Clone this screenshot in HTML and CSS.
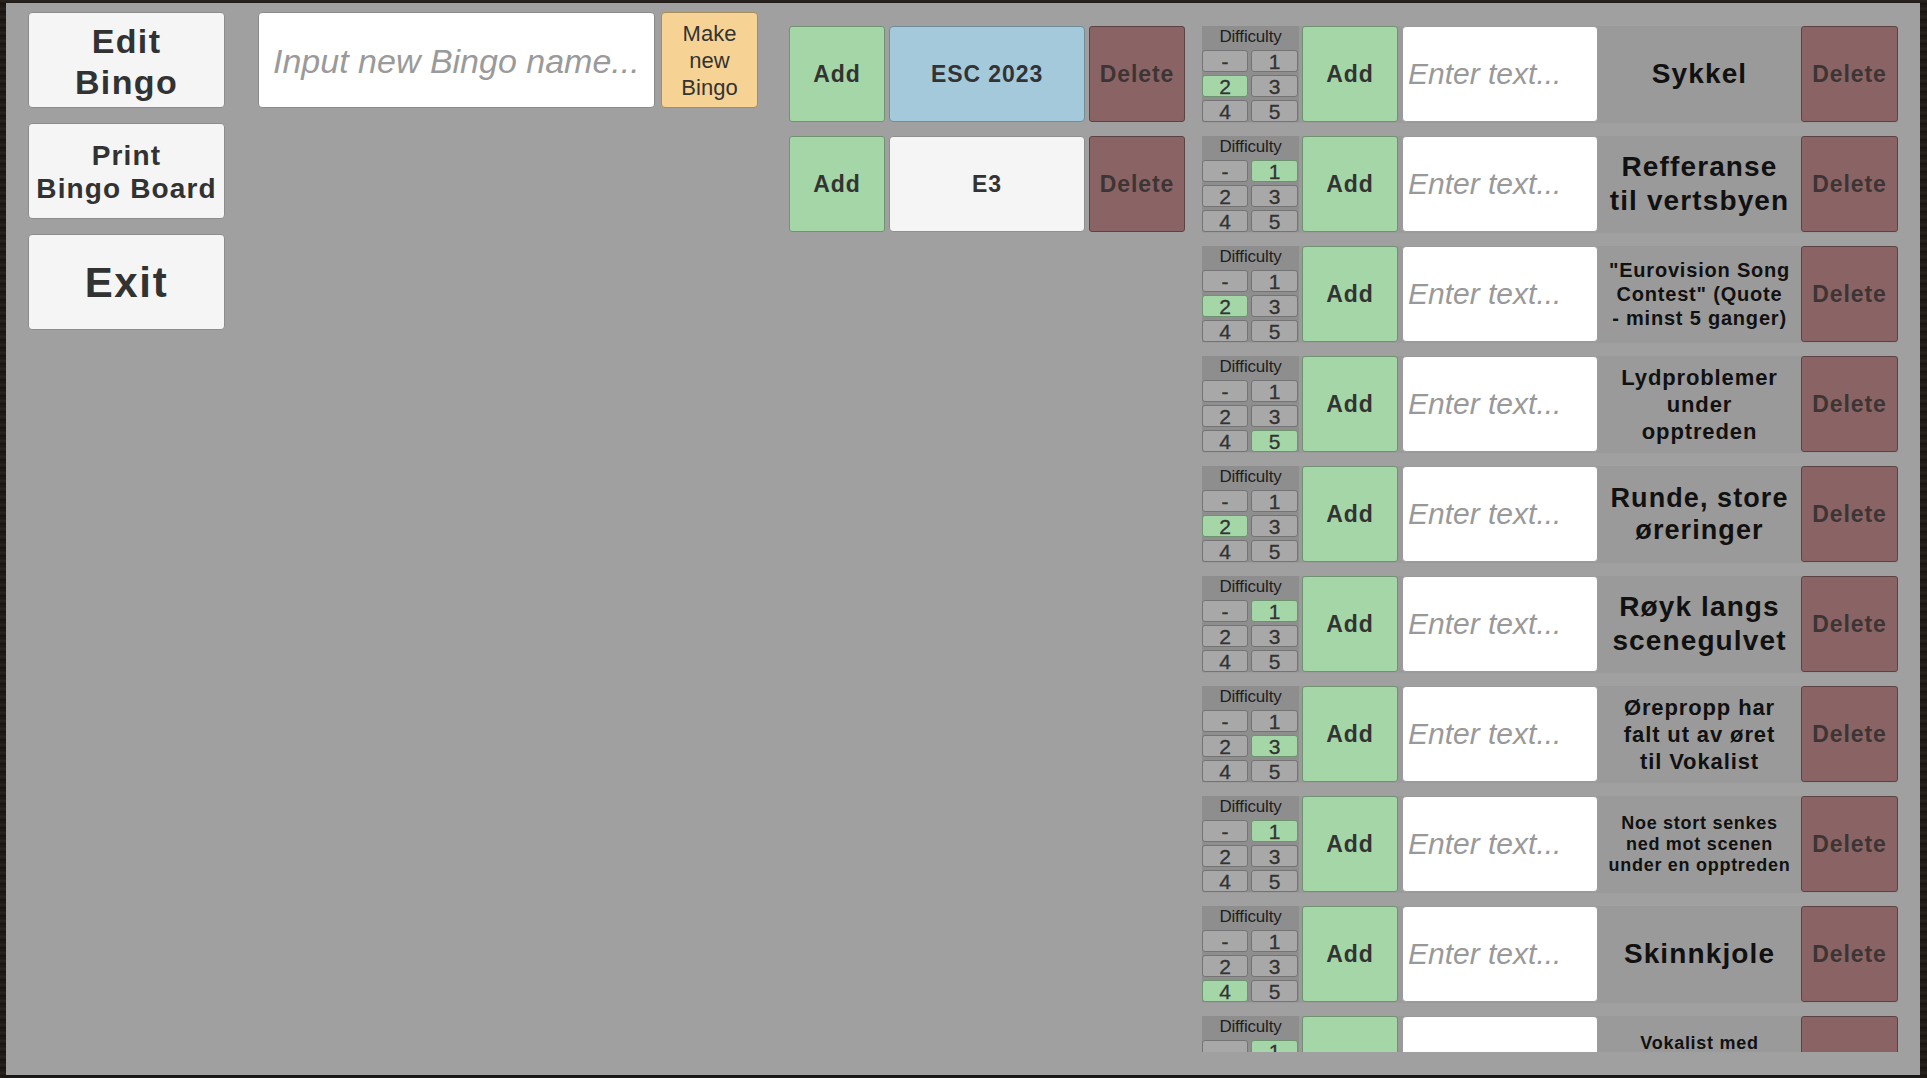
FILE: index.html
```html
<!DOCTYPE html>
<html>
<head>
<meta charset="utf-8">
<title>Edit Bingo</title>
<link rel="stylesheet" href="styles.css">
</head>
<body>
<div class="frame">
  <div class="panel">
    <div class="nav">
      <div class="navbtn edit">Edit<br>Bingo</div>
      <div class="navbtn print">Print<br>Bingo Board</div>
      <div class="navbtn exit">Exit</div>
    </div>

    <div class="newbingo">
      <div class="nameinput"><span class="ph">Input new Bingo name...</span></div>
      <div class="make">Make<br>new<br>Bingo</div>
    </div>

    <div class="bingolist">
      <div class="brow">
        <div class="btn add">Add</div>
        <div class="bname active">ESC 2023</div>
        <div class="btn del">Delete</div>
      </div>
      <div class="brow">
        <div class="btn add">Add</div>
        <div class="bname">E3</div>
        <div class="btn del">Delete</div>
      </div>
    </div>

    <div class="items">
      <div class="item">
        <div class="diff"><div class="diffhead">Difficulty</div>
          <div class="diffgrid"><span class="d">-</span><span class="d">1</span><span class="d sel">2</span><span class="d">3</span><span class="d">4</span><span class="d">5</span></div></div>
        <div class="btn add iadd">Add</div>
        <div class="entry"><span class="ph2">Enter text...</span></div>
        <div class="label s28">Sykkel</div>
        <div class="btn del idel">Delete</div>
      </div>

      <div class="item">
        <div class="diff"><div class="diffhead">Difficulty</div>
          <div class="diffgrid"><span class="d">-</span><span class="d sel">1</span><span class="d">2</span><span class="d">3</span><span class="d">4</span><span class="d">5</span></div></div>
        <div class="btn add iadd">Add</div>
        <div class="entry"><span class="ph2">Enter text...</span></div>
        <div class="label s28">Refferanse<br>til vertsbyen</div>
        <div class="btn del idel">Delete</div>
      </div>

      <div class="item">
        <div class="diff"><div class="diffhead">Difficulty</div>
          <div class="diffgrid"><span class="d">-</span><span class="d">1</span><span class="d sel">2</span><span class="d">3</span><span class="d">4</span><span class="d">5</span></div></div>
        <div class="btn add iadd">Add</div>
        <div class="entry"><span class="ph2">Enter text...</span></div>
        <div class="label s20">"Eurovision Song<br>Contest" (Quote<br>- minst 5 ganger)</div>
        <div class="btn del idel">Delete</div>
      </div>

      <div class="item">
        <div class="diff"><div class="diffhead">Difficulty</div>
          <div class="diffgrid"><span class="d">-</span><span class="d">1</span><span class="d">2</span><span class="d">3</span><span class="d">4</span><span class="d sel">5</span></div></div>
        <div class="btn add iadd">Add</div>
        <div class="entry"><span class="ph2">Enter text...</span></div>
        <div class="label s23">Lydproblemer<br>under<br>opptreden</div>
        <div class="btn del idel">Delete</div>
      </div>

      <div class="item">
        <div class="diff"><div class="diffhead">Difficulty</div>
          <div class="diffgrid"><span class="d">-</span><span class="d">1</span><span class="d sel">2</span><span class="d">3</span><span class="d">4</span><span class="d">5</span></div></div>
        <div class="btn add iadd">Add</div>
        <div class="entry"><span class="ph2">Enter text...</span></div>
        <div class="label s27">Runde, store<br>øreringer</div>
        <div class="btn del idel">Delete</div>
      </div>

      <div class="item">
        <div class="diff"><div class="diffhead">Difficulty</div>
          <div class="diffgrid"><span class="d">-</span><span class="d sel">1</span><span class="d">2</span><span class="d">3</span><span class="d">4</span><span class="d">5</span></div></div>
        <div class="btn add iadd">Add</div>
        <div class="entry"><span class="ph2">Enter text...</span></div>
        <div class="label s28">Røyk langs<br>scenegulvet</div>
        <div class="btn del idel">Delete</div>
      </div>

      <div class="item">
        <div class="diff"><div class="diffhead">Difficulty</div>
          <div class="diffgrid"><span class="d">-</span><span class="d">1</span><span class="d">2</span><span class="d sel">3</span><span class="d">4</span><span class="d">5</span></div></div>
        <div class="btn add iadd">Add</div>
        <div class="entry"><span class="ph2">Enter text...</span></div>
        <div class="label s23">Ørepropp har<br>falt ut av øret<br>til Vokalist</div>
        <div class="btn del idel">Delete</div>
      </div>

      <div class="item">
        <div class="diff"><div class="diffhead">Difficulty</div>
          <div class="diffgrid"><span class="d">-</span><span class="d sel">1</span><span class="d">2</span><span class="d">3</span><span class="d">4</span><span class="d">5</span></div></div>
        <div class="btn add iadd">Add</div>
        <div class="entry"><span class="ph2">Enter text...</span></div>
        <div class="label s18">Noe stort senkes<br>ned mot scenen<br>under en opptreden</div>
        <div class="btn del idel">Delete</div>
      </div>

      <div class="item">
        <div class="diff"><div class="diffhead">Difficulty</div>
          <div class="diffgrid"><span class="d">-</span><span class="d">1</span><span class="d">2</span><span class="d">3</span><span class="d sel">4</span><span class="d">5</span></div></div>
        <div class="btn add iadd">Add</div>
        <div class="entry"><span class="ph2">Enter text...</span></div>
        <div class="label s28">Skinnkjole</div>
        <div class="btn del idel">Delete</div>
      </div>

      <div class="item">
        <div class="diff"><div class="diffhead">Difficulty</div>
          <div class="diffgrid"><span class="d">-</span><span class="d sel">1</span><span class="d">2</span><span class="d">3</span><span class="d">4</span><span class="d">5</span></div></div>
        <div class="btn add iadd">Add</div>
        <div class="entry"><span class="ph2">Enter text...</span></div>
        <div class="label s18">Vokalist med<br>solbriller<br>på scenen</div>
        <div class="btn del idel">Delete</div>
      </div>
    </div>
  </div>
</div>
</body>
</html>
```

FILE: styles.css
```css
html, body {
  margin: 0;
  padding: 0;
  width: 1927px;
  height: 1078px;
  overflow: hidden;
  background: #1d1a17;
  background-image: repeating-linear-gradient(0deg, #221e1a 0px, #161310 2px, #2a241f 5px, #1b1814 8px);
  font-family: "Liberation Sans", Arial, sans-serif;
}

.frame {
  padding: 3px 7px 3px 6px;
}

.panel {
  width: 1914px;
  height: 1072px;
  background: #a0a0a0;
  display: flex;
  align-items: flex-start;
  padding-left: 22px;
  box-sizing: border-box;
}

/* left navigation */
.nav {
  width: 197px;
  margin-top: 9px;
  display: flex;
  flex-direction: column;
  gap: 15px;
}

.navbtn {
  height: 96px;
  background: #f5f5f5;
  border: 1px solid #8c8c8c;
  border-radius: 4px;
  box-sizing: border-box;
  display: flex;
  align-items: center;
  justify-content: center;
  text-align: center;
  color: #323232;
  font-weight: bold;
  letter-spacing: 0.04em;
}

.edit { font-size: 34px; line-height: 41px; padding-top: 3px; }
.print { font-size: 28px; line-height: 33px; padding-top: 2px; }
.exit { font-size: 42px; padding-top: 2px; }

/* new bingo */
.newbingo {
  margin-left: 33px;
  margin-top: 9px;
  display: flex;
  gap: 6px;
}

.nameinput {
  width: 397px;
  height: 96px;
  background: #ffffff;
  border: 1px solid #8a8a8a;
  border-radius: 4px;
  box-sizing: border-box;
  display: flex;
  align-items: center;
  padding-left: 14px;
  padding-top: 2px;
}

.ph {
  font-style: italic;
  font-size: 34px;
  color: #9a9a9a;
  white-space: nowrap;
}

.make {
  width: 97px;
  height: 96px;
  background: #f6d394;
  border: 1px solid #a88d5c;
  border-radius: 4px;
  box-sizing: border-box;
  display: flex;
  align-items: center;
  justify-content: center;
  text-align: center;
  font-size: 22px;
  line-height: 27px;
  color: #333333;
}

/* bingo list */
.bingolist {
  margin-left: 31px;
  margin-top: 23px;
  display: flex;
  flex-direction: column;
  gap: 14px;
}

.brow {
  display: flex;
  gap: 4px;
  height: 96px;
}

.btn {
  box-sizing: border-box;
  border-radius: 3px;
  display: flex;
  align-items: center;
  justify-content: center;
  font-weight: bold;
  font-size: 23px;
  letter-spacing: 0.04em;
  color: #333333;
}

.add {
  width: 96px;
  background: #a5d6a7;
  border: 1px solid #6f9270;
}

.del {
  width: 96px;
  background: #8a6464;
  border: 1px solid #5c4343;
  color: #3d3535;
}

.bname {
  width: 196px;
  box-sizing: border-box;
  background: #f5f5f5;
  border: 1px solid #8e8e8e;
  border-radius: 4px;
  display: flex;
  align-items: center;
  justify-content: center;
  font-weight: bold;
  font-size: 23px;
  letter-spacing: 0.04em;
  color: #333333;
}

.bname.active {
  background: #a3c9db;
  border-color: #6f8c99;
}

/* item list */
.items {
  margin-left: 17px;
  margin-top: 23px;
  width: 696px;
  height: 1026px;
  overflow: hidden;
  display: flex;
  flex-direction: column;
  gap: 13px;
}

.item {
  flex: none;
  height: 97px;
  display: flex;
  background: #9a9a9a;
}

.diff {
  width: 97px;
  height: 96px;
  background: #8e8e8e;
  display: flex;
  flex-direction: column;
}

.diffhead {
  height: 24px;
  display: flex;
  align-items: center;
  justify-content: center;
  font-size: 17px;
  color: #1e1e1e;
  letter-spacing: -0.01em;
}

.diffgrid {
  margin-top: 2px;
  display: grid;
  grid-template-columns: 46px 47px;
  grid-template-rows: 22px 22px 22px;
  column-gap: 3px;
  row-gap: 3px;
}

.d {
  box-sizing: border-box;
  background: #a8a8a8;
  border: 1px solid #747474;
  border-radius: 3px;
  display: flex;
  align-items: center;
  justify-content: center;
  font-size: 21px;
  color: #333333;
  line-height: 1;
  -webkit-text-stroke: 0.3px #333333;
}

.d.sel {
  background: #a5d6a7;
  border-color: #6f9270;
}

.iadd {
  margin-left: 3px;
  height: 96px;
}

.entry {
  margin-left: 4px;
  width: 196px;
  height: 96px;
  box-sizing: border-box;
  background: #ffffff;
  border: 1px solid #9a9a9a;
  border-radius: 4px;
  display: flex;
  align-items: center;
  padding-left: 5px;
}

.ph2 {
  font-style: italic;
  font-size: 30px;
  color: #999999;
  white-space: nowrap;
}

.label {
  width: 203px;
  height: 96px;
  display: flex;
  align-items: center;
  justify-content: center;
  text-align: center;
  font-weight: bold;
  color: #111111;
  letter-spacing: 0.04em;
  white-space: nowrap;
}

.s28 { font-size: 28px; line-height: 34px; }
.s27 { font-size: 27px; line-height: 32px; }
.s23 { font-size: 22px; line-height: 27px; }
.s20 { font-size: 20px; line-height: 24px; }
.s18 { font-size: 18px; line-height: 21px; }

.idel {
  width: 97px;
  height: 96px;
}
```
